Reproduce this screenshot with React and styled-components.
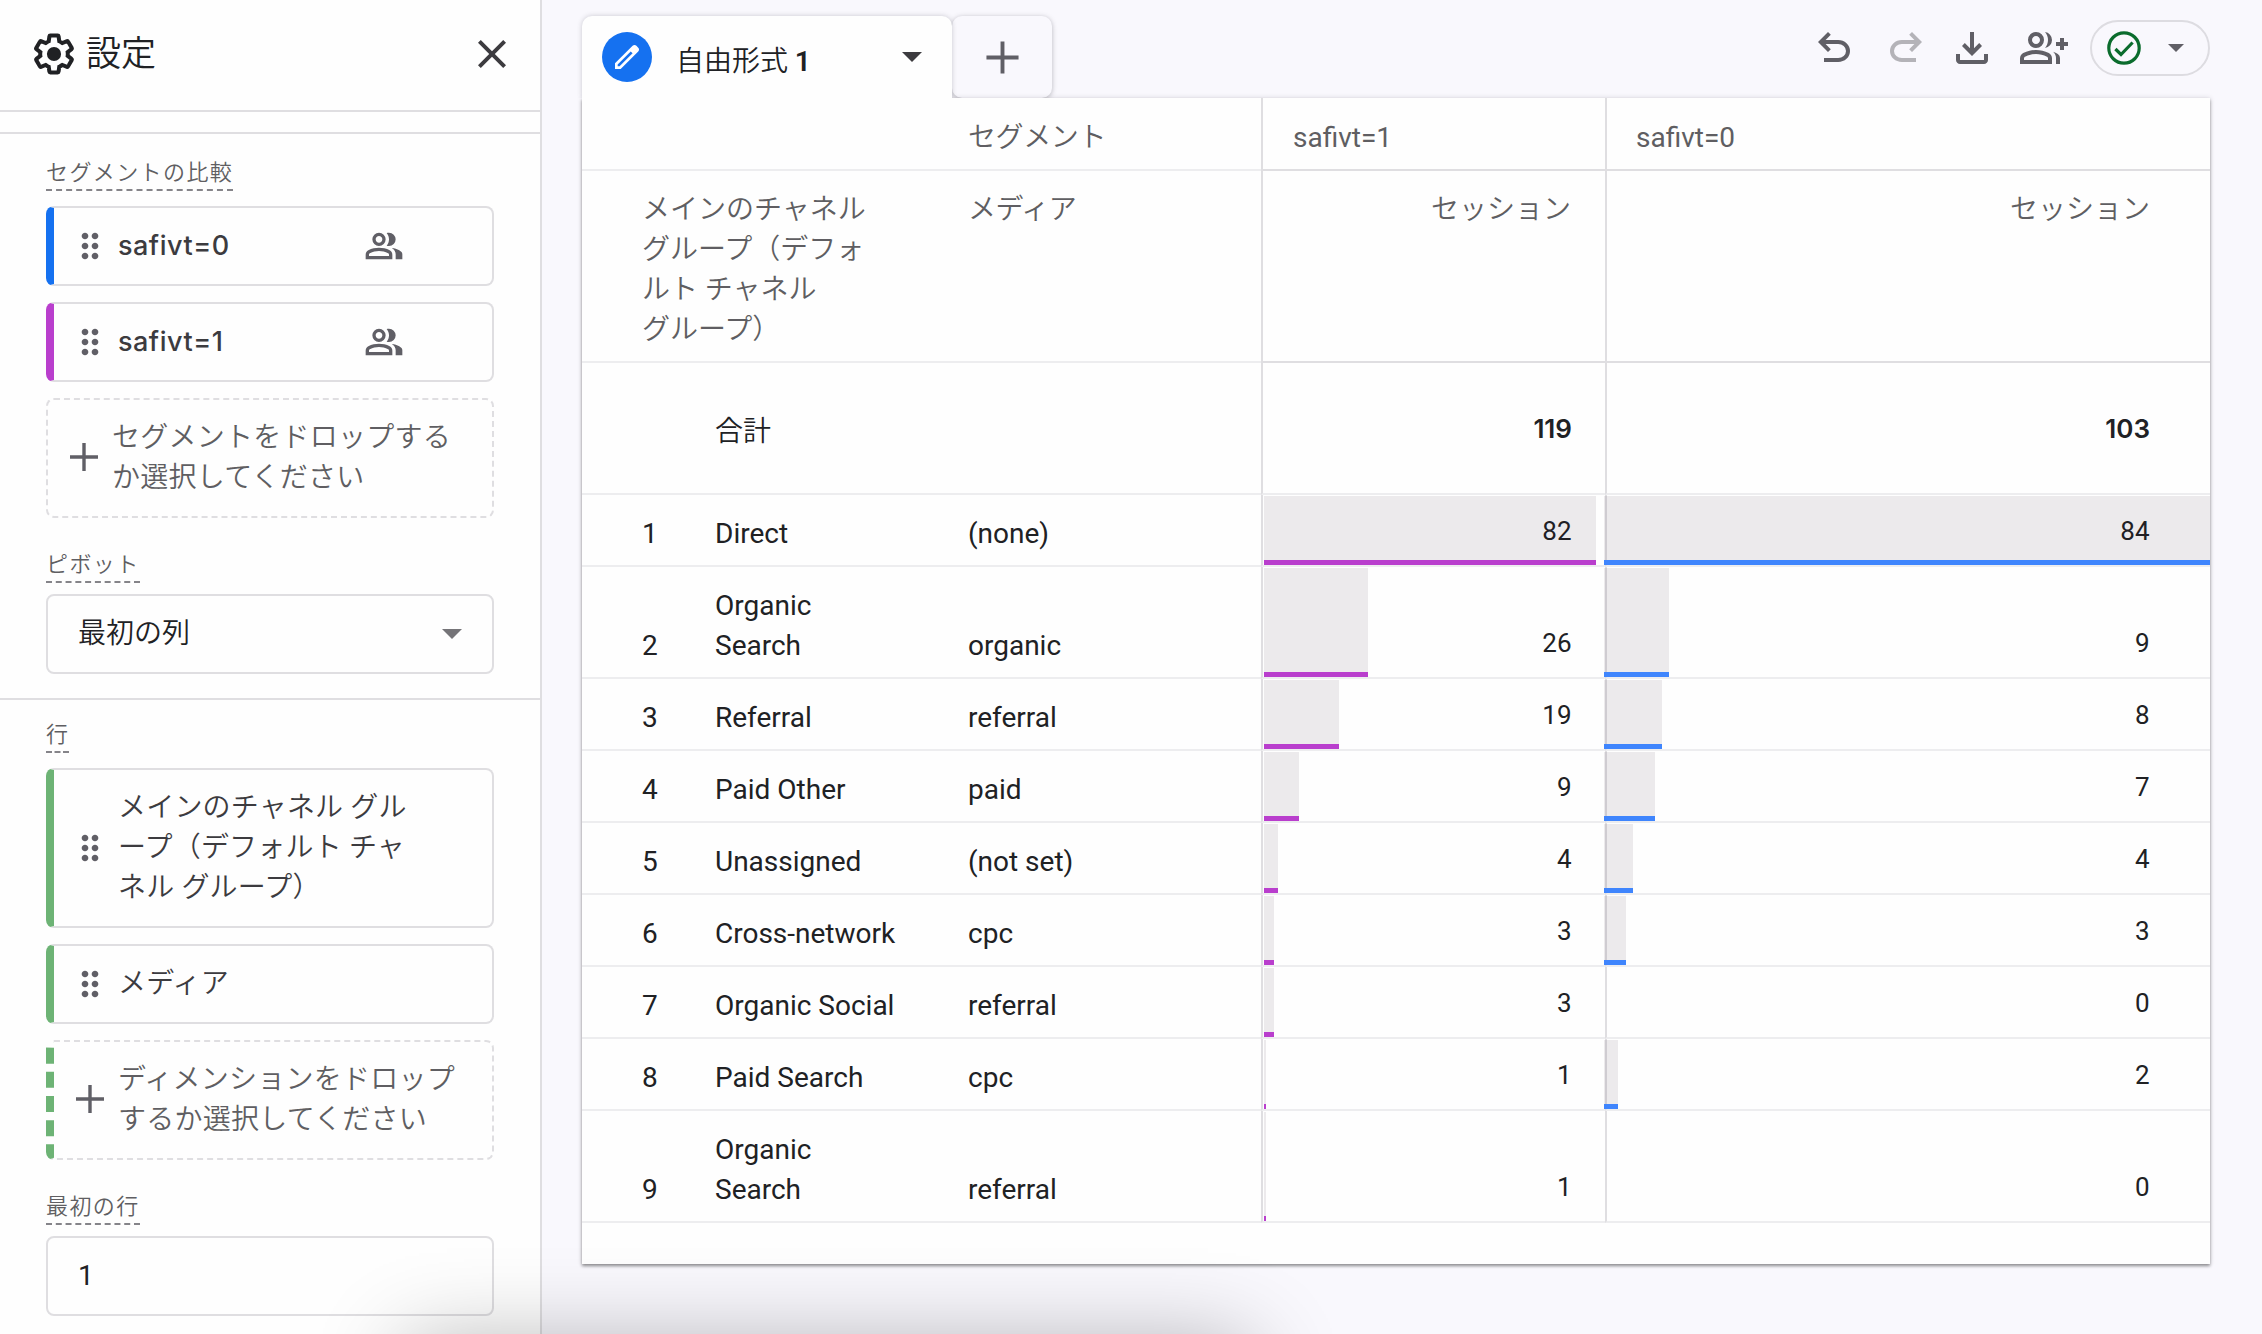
import React from "react";
import styled, { createGlobalStyle } from "styled-components";

const colors = {
  page: "#f9f8fd",
  surface: "#fefefe",
  line: "#dfdee1",
  lightLine: "#ededef",
  text: "#202124",
  label: "#5f5e62",
  icon: "#605f66",
  blue: "#1571f0",
  barBlue: "#3f85fd",
  purple: "#b93ecd",
  green: "#6db375",
  check: "#0b6c2d",
};

// japanese text is set a little lighter than the latin text beside it
const jpWeight = 350;

const GlobalStyles = createGlobalStyle`
  * {
    box-sizing: border-box;
  }

  body {
    margin: 0;
    overflow: hidden;
    background: ${colors.page};
    color: ${colors.text};
    font-family: Roboto, "Noto Sans CJK JP", sans-serif;
    font-size: 28px;
    line-height: 40px;
  }
`;

const Page = styled.div`
  display: flex;
  height: 100vh;
  overflow: hidden;
`;

/* ---------- icons ---------- */

const Svg = styled.svg`
  display: block;
  flex: none;
  width: ${(p) => p.$size}px;
  height: ${(p) => p.$size}px;
  fill: ${(p) => p.$color || colors.icon};
`;

const paths = {
  close:
    "m256-200-56-56 224-224-224-224 56-56 224 224 224-224 56 56-224 224 224 224-56 56-224-224-224 224Z",
  add: "M446-446H200v-68h246v-246h68v246h246v68H514v246h-68v-246Z",
  drag: "M360-160q-33 0-56.500-23.500T280-240q0-33 23.500-56.500T360-320q33 0 56.500 23.500T440-240q0 33-23.500 56.500T360-160Zm240 0q-33 0-56.500-23.500T520-240q0-33 23.500-56.500T600-320q33 0 56.500 23.500T680-240q0 33-23.500 56.500T600-160ZM360-400q-33 0-56.500-23.500T280-480q0-33 23.500-56.500T360-560q33 0 56.500 23.500T440-480q0 33-23.500 56.500T360-400Zm240 0q-33 0-56.500-23.500T520-480q0-33 23.500-56.500T600-560q33 0 56.500 23.500T680-480q0 33-23.500 56.500T600-400ZM360-640q-33 0-56.500-23.500T280-720q0-33 23.500-56.500T360-800q33 0 56.500 23.500T440-720q0 33-23.500 56.500T360-640Zm240 0q-33 0-56.500-23.500T520-720q0-33 23.500-56.500T600-800q33 0 56.500 23.500T680-720q0 33-23.500 56.500T600-640Z",
  group:
    "M40-160v-112q0-34 17.5-62.5T104-378q62-31 126-46.5T360-440q66 0 130 15.5T616-378q29 15 46.5 43.5T680-272v112H40Zm720 0v-120q0-44-24.5-84.5T666-434q51 6 96 20.5t84 35.5q36 20 55 44.5t19 53.5v120H760ZM360-480q-66 0-113-47t-47-113q0-66 47-113t113-47q66 0 113 47t47 113q0 66-47 113t-113 47Zm400-160q0 66-47 113t-113 47q-11 0-28-2.5t-28-5.5q27-32 41.5-71t14.5-81q0-42-14.5-81T544-792q14-5 28-6.5t28-1.5q66 0 113 47t47 113ZM120-240h480v-32q0-11-5.5-20T580-306q-54-27-109-40.5T360-360q-56 0-111 13.5T140-306q-9 5-14.5 14t-5.5 20v32Zm240-320q33 0 56.5-23.5T440-640q0-33-23.5-56.5T360-720q-33 0-56.5 23.5T280-640q0 33 23.5 56.5T360-560Z",
  edit: "M200-200h57l391-391-57-57-391 391v57Zm-80 80v-170l528-527q12-11 26.5-17t30.5-6q16 0 31 6t26 18l55 56q12 11 17.5 26t5.5 30q0 16-5.5 30.5T817-647L290-120H120Z",
  undo: "M280-200v-80h284q63 0 109.5-40T720-420q0-60-46.5-100T564-560H312l104 104-56 56-200-200 200-200 56 56-104 104h252q97 0 166.5 63T800-420q0 94-69.5 157T564-200H280Z",
  redo: "M396-200q-97 0-166.5-63T160-420q0-94 69.5-157T396-640h252L544-744l56-56 200 200-200 200-56-56 104-104H396q-63 0-109.5 40T240-420q0 60 46.500 100T396-280h284v80H396Z",
  download:
    "M480-320 280-520l56-58 104 104v-326h80v326l104-104 56 58-200 200ZM240-160q-33 0-56.5-23.5T160-240v-120h80v120h480v-120h80v120q0 33-23.5 56.5T720-160H240Z",
  groupAdd:
    "M500-482q29-32 44.5-73t15.5-85q0-44-15.5-85T500-798q60 8 100 53t40 105q0 60-40 105t-100 53Zm220 322v-120q0-36-16-68.5T662-406q51 18 94.5 46.5T800-280v120h-80Zm80-280v-80h-80v-80h80v-80h80v80h80v80h-80v80h-80Zm-480-40q-66 0-113-47t-47-113q0-66 47-113t113-47q66 0 113 47t47 113q0 66-47 113t-113 47ZM0-160v-112q0-34 17.5-62.5T64-378q62-31 126-46.5T320-440q66 0 130 15.5T576-378q29 15 46.5 43.5T640-272v112H0Zm320-400q33 0 56.5-23.5T400-640q0-33-23.5-56.5T320-720q-33 0-56.5 23.5T240-640q0 33 23.5 56.5T320-560ZM80-240h480v-32q0-11-5.5-20T540-306q-54-27-109-40.5T320-360q-56 0-111 13.5T100-306q-9 5-14.5 14T80-272v32Z",
};

const Icon = ({ name, size = 48, color }) => (
  <Svg viewBox="0 -960 960 960" $size={size} $color={color}>
    <path d={paths[name]} />
  </Svg>
);

const GearIcon = () => (
  <Svg viewBox="0 0 24 24" $size={46} $color={colors.text}>
    <path
      fill="none"
      stroke={colors.text}
      strokeWidth="2.1"
      d="M19.14 12.94c.04-.3.06-.61.06-.94 0-.32-.02-.64-.07-.94l2.03-1.58c.18-.14.23-.41.12-.61l-1.92-3.32c-.12-.22-.37-.29-.59-.22l-2.39.96c-.5-.38-1.03-.7-1.62-.94l-.36-2.54c-.04-.24-.24-.41-.48-.41h-3.84c-.24 0-.43.17-.47.41l-.36 2.54c-.59.24-1.13.57-1.62.94l-2.39-.96c-.22-.08-.47 0-.59.22L2.74 8.87c-.12.21-.08.47.12.61l2.03 1.58c-.05.3-.09.63-.09.94s.02.64.07.94l-2.03 1.58c-.18.14-.23.41-.12.61l1.92 3.32c.12.22.37.29.59.22l2.39-.96c.5.38 1.03.7 1.62.94l.36 2.54c.05.24.24.41.48.41h3.84c.24 0 .44-.17.47-.41l.36-2.54c.59-.24 1.13-.56 1.62-.94l2.39.96c.22.08.47 0 .59-.22l1.92-3.32c.12-.22.07-.47-.12-.61l-2.01-1.58z"
    />
    <circle cx="12" cy="12" r="3.7" />
  </Svg>
);

const CheckIcon = () => (
  <Svg viewBox="0 0 34 34" $size={34}>
    <g fill="none" stroke={colors.check} strokeWidth="3.2">
      <circle cx="17" cy="17" r="15.2" />
      <path d="M8.400 18 14 23.500 25.600 11.500" />
    </g>
  </Svg>
);

const Caret = styled.span`
  flex: none;
  border: solid transparent;
  border-width: ${(p) => p.$size}px ${(p) => p.$size}px 0;
  border-top-color: ${(p) => p.$color || colors.icon};
`;

/* ---------- settings panel ---------- */

const Sidebar = styled.aside`
  flex: none;
  width: 542px;
  background: ${colors.surface};
  border-right: 2px solid ${colors.line};
  font-weight: ${jpWeight};
`;

const SidebarHeader = styled.header`
  display: flex;
  align-items: center;
  height: 112px;
  padding: 0 24px 2px 31px;
  border-bottom: 2px solid ${colors.line};
`;

const SidebarTitle = styled.h2`
  flex: 1;
  margin: 2px 0 0 9px;
  font-size: 35px;
  font-weight: ${jpWeight};
`;

const Strip = styled.div`
  height: 22px;
  border-bottom: 2px solid ${colors.line};
`;

const Section = styled.section`
  display: flex;
  flex-direction: column;
  align-items: flex-start;
  padding: ${(p) => p.$top}px 46px 24px;

  & + & {
    border-top: 2px solid ${colors.line};
  }
`;

const Label = styled.div`
  margin: ${(p) => (p.$spaced ? "35px 0 11px" : "0 0 15px")};
  padding-bottom: 4px;
  border-bottom: 2px dashed #858489;
  color: ${colors.label};
  font-size: 22px;
  line-height: 24px;
  letter-spacing: 1.4px;
`;

const CardList = styled.div`
  display: flex;
  flex-direction: column;
  gap: 16px;
  width: 448px;
`;

const Card = styled.div`
  display: flex;
  align-items: center;
  min-height: 80px;
  padding: 0 36px 0 16px;
  border: 2px solid ${colors.line};
  border-left: 8px solid ${(p) => p.$color};
  border-radius: 8px;
`;

const CardText = styled.div`
  flex: 1;
  margin-left: 8px;
  padding: 18px 0;
  color: #3c3b3f;
  letter-spacing: 0.2px;
`;

const SegmentName = styled(CardText)`
  padding: 0;
  font-family: Inter, sans-serif;
  font-size: 27px;
  font-weight: 500;
  letter-spacing: 0.5px;
`;

const SegmentIcon = styled.div`
  margin-right: 52px;
`;

const DropZone = styled.div`
  display: flex;
  align-items: center;
  gap: 4px;
  height: 120px;
  padding: 0 12px 2px;
  border: 2px dashed ${colors.line};
  ${(p) => p.$color && `border-left: 8px dashed ${p.$color};`}
  border-radius: 8px;
  color: ${colors.label};
`;

const DropText = styled.div`
  padding-top: 2px;
  letter-spacing: 0.25px;
  white-space: nowrap;
`;

const Field = styled.div`
  display: flex;
  align-items: center;
  justify-content: space-between;
  width: 448px;
  height: 80px;
  padding: 0 30px;
  border: 2px solid ${colors.line};
  border-radius: 8px;
  font-weight: ${(p) => (p.$numeric ? 400 : jpWeight)};
`;

/* ---------- report ---------- */

const Main = styled.main`
  flex: 1;
  padding: 0 52px 0 40px;
`;

const TopBar = styled.div`
  display: flex;
  justify-content: space-between;
  height: 98px;
`;

const Tabs = styled.div`
  display: flex;
  align-items: flex-end;
`;

const ActiveTab = styled.div`
  position: relative;
  z-index: 1;
  display: flex;
  align-items: center;
  width: 370px;
  height: 82px;
  padding: 0 30px 0 20px;
  background: ${colors.surface};
  border-radius: 10px 10px 0 0;
  box-shadow: 0 0 5px rgba(60, 58, 70, 0.25);
  clip-path: inset(-8px -8px 0 -8px);
`;

const EditBadge = styled.div`
  display: flex;
  align-items: center;
  justify-content: center;
  width: 50px;
  height: 50px;
  border-radius: 50%;
  background: ${colors.blue};
`;

const TabName = styled.div`
  flex: 1;
  padding: 9px 0 0 24px;
  font-weight: ${jpWeight};

  b {
    font-weight: 600;
  }
`;

const AddTab = styled.div`
  display: flex;
  align-items: center;
  justify-content: center;
  width: 100px;
  height: 82px;
  border-radius: 10px;
  box-shadow: 0 1px 5px rgba(60, 58, 70, 0.35);
`;

const Toolbar = styled.div`
  display: flex;
  align-items: center;
  height: 96px;
`;

const ToolButton = styled.div`
  margin-right: ${(p) => p.$gap}px;
`;

const StatusPill = styled.div`
  display: flex;
  align-items: center;
  justify-content: space-between;
  width: 120px;
  height: 56px;
  padding: 0 24px 0 15px;
  border: 2px solid #dddce1;
  border-radius: 28px;
`;

const Sheet = styled.div`
  position: relative;
  height: 1166px;
  background: ${colors.surface};
  box-shadow: 0 2px 3px rgba(0, 0, 0, 0.4), 0 0 5px rgba(60, 58, 70, 0.16);
`;

const Row = styled.div`
  display: grid;
  grid-template-columns: 133px 253px 293px 344px 1fr;
  height: ${(p) => p.$height || 72}px;

  > * {
    border-bottom: 2px solid ${colors.lightLine};
  }
`;

const Index = styled.div`
  display: flex;
  align-items: flex-end;
  padding: 0 0 11px 60px;
`;

const Dimension = styled.div`
  display: flex;
  align-items: flex-end;
  padding: 0 67px 11px 0;
`;

const ChannelHead = styled.div`
  grid-column: span 2;
  padding: 19px 0 0 60px;
  color: ${colors.label};
  font-weight: ${jpWeight};
`;

const MediumHead = styled.div`
  padding-top: ${(p) => (p.$first ? 20 : 19)}px;
  color: ${colors.label};
  font-weight: ${jpWeight};
  letter-spacing: -0.4px;
`;

const MetricHead = styled.div`
  padding: 19px ${(p) => (p.$last ? 60 : 34)}px 0 0;
  border-left: 2px solid ${colors.line};
  border-bottom-color: ${colors.line};
  color: ${colors.label};
  font-weight: ${jpWeight};
  text-align: right;
`;

const SegmentHead = styled(MetricHead)`
  padding: 20px 0 0 ${(p) => (p.$last ? 29 : 30)}px;
  font-weight: 400;
  text-align: left;
`;

const TotalLabel = styled.div`
  display: flex;
  align-items: center;
  padding-top: 8px;
  font-weight: ${jpWeight};
`;

const Value = styled.div`
  position: relative;
  display: flex;
  align-items: flex-end;
  justify-content: flex-end;
  padding: 0 ${(p) => (p.$last ? 60 : 33)}px 14px 0;
  border-left: 2px solid ${colors.line};
  font-size: 26px;
  letter-spacing: 0.3px;
`;

const Total = styled(Value)`
  align-items: center;
  padding-bottom: 0;
  padding-top: 2px;
  font-family: Inter, sans-serif;
  font-size: 26px;
  font-weight: 600;
  letter-spacing: 0;
`;

const Bar = styled.div`
  position: absolute;
  top: 1px;
  bottom: 0;
  left: ${(p) => (p.$last ? -3 : 1)}px;
  background: rgba(50, 20, 50, 0.085);
  border-bottom: 5px solid ${(p) => p.$color};
`;

const BottomShadow = styled.div`
  position: fixed;
  top: 1344px;
  left: 405px;
  width: 845px;
  height: 300px;
  box-shadow: 0 0 84px rgba(0, 0, 0, 0.3);
  pointer-events: none;
`;

// bar lengths are in pixels, first for safivt=1 and then for safivt=0
const rows = [
  { channel: "Direct", medium: "(none)", values: [82, 84], bars: [332, 606] },
  { channel: "Organic Search", medium: "organic", values: [26, 9], bars: [104, 65], tall: true },
  { channel: "Referral", medium: "referral", values: [19, 8], bars: [75, 58] },
  { channel: "Paid Other", medium: "paid", values: [9, 7], bars: [35, 51] },
  { channel: "Unassigned", medium: "(not set)", values: [4, 4], bars: [14, 29] },
  { channel: "Cross-network", medium: "cpc", values: [3, 3], bars: [10, 22] },
  { channel: "Organic Social", medium: "referral", values: [3, 0], bars: [10, 0] },
  { channel: "Paid Search", medium: "cpc", values: [1, 2], bars: [2, 14] },
  { channel: "Organic Search", medium: "referral", values: [1, 0], bars: [2, 0], tall: true },
];

const Segment = ({ name, color }) => (
  <Card $color={color}>
    <Icon name="drag" size={40} />
    <SegmentName>{name}</SegmentName>
    <SegmentIcon>
      <Icon name="group" size={40} />
    </SegmentIcon>
  </Card>
);

const Settings = () => (
  <Sidebar>
    <SidebarHeader>
      <GearIcon />
      <SidebarTitle>設定</SidebarTitle>
      <Icon name="close" color="#3c3b3f" />
    </SidebarHeader>
    <Strip />

    <Section $top={27}>
      <Label>セグメントの比較</Label>
      <CardList>
        <Segment name="safivt=0" color={colors.blue} />
        <Segment name="safivt=1" color={colors.purple} />
        <DropZone>
          <Icon name="add" />
          <DropText>
            セグメントをドロップする
            <br />
            か選択してください
          </DropText>
        </DropZone>
      </CardList>
      <Label $spaced>ピボット</Label>
      <Field>
        最初の列
        <Caret $size={10} $color="#757478" />
      </Field>
    </Section>

    <Section $top={23}>
      <Label>行</Label>
      <CardList>
        <Card $color={colors.green}>
          <Icon name="drag" size={40} />
          <CardText>
            メインのチャネル グル
            <br />
            ープ（デフォルト チャ
            <br />
            ネル グループ）
          </CardText>
        </Card>
        <Card $color={colors.green}>
          <Icon name="drag" size={40} />
          <CardText>メディア</CardText>
        </Card>
        <DropZone $color={colors.green}>
          <Icon name="add" />
          <DropText>
            ディメンションをドロップ
            <br />
            するか選択してください
          </DropText>
        </DropZone>
      </CardList>
      <Label $spaced>最初の行</Label>
      <Field $numeric>1</Field>
    </Section>
  </Sidebar>
);

const Report = () => (
  <Sheet>
    <Row $height={73}>
      <ChannelHead />
      <MediumHead $first>セグメント</MediumHead>
      <SegmentHead>safivt=1</SegmentHead>
      <SegmentHead $last>safivt=0</SegmentHead>
    </Row>
    <Row $height={192}>
      <ChannelHead>
        メインのチャネル
        <br />
        グループ（デフォ
        <br />
        ルト チャネル
        <br />
        グループ）
      </ChannelHead>
      <MediumHead>メディア</MediumHead>
      <MetricHead>セッション</MetricHead>
      <MetricHead $last>セッション</MetricHead>
    </Row>
    <Row $height={132}>
      <Index />
      <TotalLabel>合計</TotalLabel>
      <Dimension />
      <Total>119</Total>
      <Total $last>103</Total>
    </Row>
    {rows.map((row, i) => (
      <Row key={i} $height={row.tall ? 112 : 72}>
        <Index>{i + 1}</Index>
        <Dimension>{row.channel}</Dimension>
        <Dimension>{row.medium}</Dimension>
        <Value>
          {row.bars[0] > 0 && <Bar $color={colors.purple} style={{ width: row.bars[0] }} />}
          {row.values[0]}
        </Value>
        <Value $last>
          {row.bars[1] > 0 && <Bar $last $color={colors.barBlue} style={{ width: row.bars[1] }} />}
          {row.values[1]}
        </Value>
      </Row>
    ))}
  </Sheet>
);

const App = () => (
  <Page>
    <GlobalStyles />
    <Settings />
    <Main>
      <TopBar>
        <Tabs>
          <ActiveTab>
            <EditBadge>
              <Icon name="edit" size={32} color="#fff" />
            </EditBadge>
            <TabName>
              自由形式 <b>1</b>
            </TabName>
            <Caret $size={10} $color="#3c3b3f" />
          </ActiveTab>
          <AddTab>
            <Icon name="add" size={55} />
          </AddTab>
        </Tabs>
        <Toolbar>
          <ToolButton $gap={24}>
            <Icon name="undo" />
          </ToolButton>
          <ToolButton $gap={18}>
            <Icon name="redo" color="#b4b3b8" />
          </ToolButton>
          <ToolButton $gap={24}>
            <Icon name="download" />
          </ToolButton>
          <ToolButton $gap={22}>
            <Icon name="groupAdd" />
          </ToolButton>
          <StatusPill>
            <CheckIcon />
            <Caret $size={8} />
          </StatusPill>
        </Toolbar>
      </TopBar>
      <Report />
    </Main>
    <BottomShadow />
  </Page>
);

export default App;
